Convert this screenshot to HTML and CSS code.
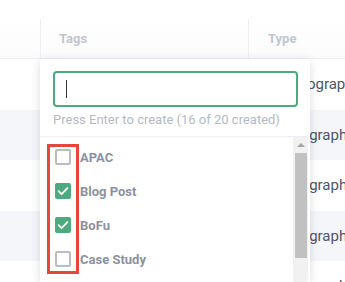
FILE: index.html
```html
<!DOCTYPE html>
<html lang="en">
<head>
  <meta charset="UTF-8" />
  <meta name="viewport" content="width=device-width, initial-scale=1.0" />
  <title>Tags</title>
  <link rel="stylesheet" href="styles.css">
</head>
<body>
  <div class="table">
    <div class="row head">
      <div class="cell first"></div>
      <div class="cell tags">Tags</div>
      <div class="cell type">Type</div>
    </div>
    <div class="row"><div class="cell first"></div><div class="cell tags"></div><div class="cell type"><span class="val">Typography</span></div></div>
    <div class="row alt"><div class="cell first"></div><div class="cell tags"></div><div class="cell type"><span class="val">Infographic</span></div></div>
    <div class="row"><div class="cell first"></div><div class="cell tags"></div><div class="cell type"><span class="val">Infographic</span></div></div>
    <div class="row alt"><div class="cell first"></div><div class="cell tags"></div><div class="cell type"><span class="val">Infographic</span></div></div>
    <div class="row"><div class="cell first"></div><div class="cell tags"></div><div class="cell type"><span class="val">Infographic</span></div></div>
  </div>

  <div class="dropdown">
    <div class="search">
      <div class="input"><span class="caret"></span></div>
      <div class="hint">Press Enter to create (16 of 20 created)</div>
    </div>
    <div class="list">
      <div class="options">
        <div class="option"><span class="box"></span>APAC</div>
        <div class="option"><span class="box checked"><svg viewBox="0 0 16 16" width="16" height="16"><path d="M3.6 8.2 L6.6 11.1 L12.4 5.2" fill="none" stroke="#fff" stroke-width="1.8" stroke-linecap="round" stroke-linejoin="round"/></svg></span>Blog Post</div>
        <div class="option"><span class="box checked"><svg viewBox="0 0 16 16" width="16" height="16"><path d="M3.6 8.2 L6.6 11.1 L12.4 5.2" fill="none" stroke="#fff" stroke-width="1.8" stroke-linecap="round" stroke-linejoin="round"/></svg></span>BoFu</div>
        <div class="option"><span class="box"></span>Case Study</div>
      </div>
      <div class="scrollbar">
        <span class="arrow"></span>
        <span class="thumb"></span>
      </div>
      <div class="highlight"></div>
    </div>
  </div>
</body>
</html>
```

FILE: styles.css
```css
body {
  margin: 0;
  font-family: Roboto, 'Liberation Sans', sans-serif;
  background: #fff;
  width: 345px;
  height: 282px;
  overflow: hidden;
  position: relative;
}
.table {
  margin-top: 19px;
}
.row {
  display: flex;
  height: 50.5px;
  background: #fff;
}
.row.alt {
  background: #f5f6fa;
}
.row.head {
  height: 39px;
  border-bottom: 1px solid #eceef2;
  background: linear-gradient(#fff, #fbfbfc);
}
.cell {
  display: flex;
  align-items: center;
  white-space: nowrap;
  overflow: hidden;
}
.first {
  width: 40px;
}
.tags {
  width: 208px;
}
.type {
  flex: 1;
}
.head .cell {
  padding-left: 18px;
  box-sizing: border-box;
  color: #c2c5cd;
  font-weight: bold;
  font-size: 13px;
}
.head .first {
  padding: 0;
}
.head .tags,
.head .type {
  border-left: 1px solid #eceef2;
}
.head .type {
  padding-left: 19px;
}
.val {
  padding-left: 35px;
  font-size: 15px;
  color: #4f5566;
}

.dropdown {
  position: absolute;
  left: 40px;
  top: 59px;
  width: 270px;
  height: 223px;
  background: #fff;
  border-radius: 4px 4px 0 0;
  box-shadow: 0 2px 10px rgba(30, 35, 50, 0.16);
}
.search {
  padding: 12px 12px 0 13px;
  border-bottom: 1px solid #eceef3;
  height: 65px;
}
.input {
  box-sizing: border-box;
  width: 245px;
  height: 36px;
  border: 2px solid #4caa7e;
  border-radius: 4px;
  display: flex;
  align-items: center;
  padding-left: 11px;
}
.caret {
  width: 1px;
  height: 18px;
  background: #333;
}
.hint {
  margin-top: 5px;
  font-size: 13px;
  color: #b5b9c3;
  white-space: nowrap;
}
.list {
  display: flex;
  position: relative;
  height: 157px;
}
.options {
  flex: 1;
  padding-top: 3px;
}
.option {
  display: flex;
  align-items: center;
  gap: 9px;
  height: 34px;
  padding-left: 15px;
  font-size: 13px;
  font-weight: bold;
  color: #8c91a2;
}
.box {
  box-sizing: border-box;
  width: 16px;
  height: 16px;
  border: 2px solid #b9bcc6;
  border-radius: 2px;
  display: flex;
}
.box.checked {
  border: none;
  background: #4caa7e;
}
.scrollbar {
  width: 15px;
  margin-right: 2px;
  background: #f1f1f1;
  display: flex;
  flex-direction: column;
  align-items: center;
}
.arrow {
  margin-top: 6px;
  width: 0;
  height: 0;
  border-left: 4px solid transparent;
  border-right: 4px solid transparent;
  border-bottom: 4px solid #a3a3a3;
}
.thumb {
  margin-top: 6px;
  width: 12px;
  height: 105px;
  background: #c1c1c1;
}
.highlight {
  position: absolute;
  left: 7px;
  top: 7px;
  width: 26px;
  height: 124px;
  border: 3px solid #e8453c;
}
```
